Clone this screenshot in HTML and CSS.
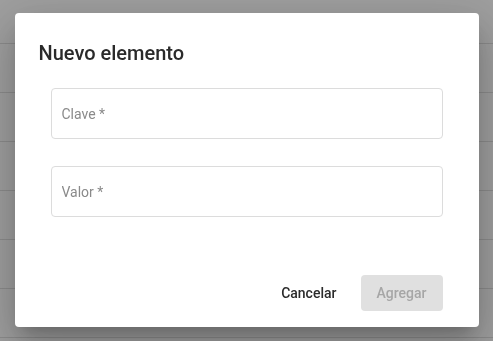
FILE: index.html
```html
<!DOCTYPE html>
<html lang="es">
<head>
    <meta charset="UTF-8">
    <title>Nuevo elemento</title>
    <link rel="stylesheet" href="styles.css">
</head>
<body>
<div class="page">
    <div class="row head"></div>
    <div class="row"></div>
    <div class="row"></div>
    <div class="row"></div>
    <div class="row"></div>
    <div class="row"></div>
    <div class="row"></div>
</div>

<div class="overlay">
    <div class="dialog">
        <h2 class="title">Nuevo elemento</h2>
        <div class="fields">
            <input class="field" type="text" placeholder="Clave *">
            <input class="field" type="text" placeholder="Valor *">
        </div>
        <div class="actions">
            <button class="btn">Cancelar</button>
            <button class="btn primary" disabled>Agregar</button>
        </div>
    </div>
</div>
</body>
</html>
```

FILE: styles.css
```css
body {
    margin: 0;
    font-family: Roboto, "Liberation Sans", sans-serif;
    background: #fff;
}

.page {
    display: flex;
    flex-direction: column;
}

.row {
    height: 48px;
    border-bottom: 1px solid #e0e0e0;
}
.row.head {
    height: 43px;
}

.overlay {
    position: fixed;
    inset: 0;
    background: rgba(0, 0, 0, 0.38);
    display: flex;
    align-items: flex-start;
    justify-content: center;
    padding-top: 13px;
}

.dialog {
    width: 464px;
    background: #fff;
    border-radius: 4px;
    box-shadow: 0 11px 15px -7px rgba(0, 0, 0, .2),
                0 24px 38px 3px rgba(0, 0, 0, .14),
                0 9px 46px 8px rgba(0, 0, 0, .12);
    padding: 24px 24px 16px;
    box-sizing: border-box;
    display: flex;
    flex-direction: column;
}

.title {
    margin: 0;
    font-size: 20px;
    font-weight: 500;
    line-height: 32px;
    color: #2a2a2a;
}

.fields {
    display: flex;
    flex-direction: column;
    gap: 27px;
    margin-top: 19px;
    padding: 0 12px;
}

.field {
    height: 51px;
    box-sizing: border-box;
    border: 1px solid #dcdcdc;
    border-radius: 4px;
    padding: 0 10px;
    font-family: inherit;
    font-size: 14px;
    color: #212121;
    outline: none;
}
.field::placeholder {
    color: #8a8a8a;
}

.actions {
    display: flex;
    justify-content: flex-end;
    gap: 8px;
    margin-top: 58px;
    padding: 0 12px;
}

.btn {
    height: 36px;
    padding: 0 16px;
    border: none;
    border-radius: 4px;
    background: transparent;
    font-family: inherit;
    font-size: 14px;
    font-weight: 500;
    color: #2b2b2b;
}
.btn.primary {
    min-width: 82px;
    background: #e0e0e0;
    color: #a6a6a6;
}
```
